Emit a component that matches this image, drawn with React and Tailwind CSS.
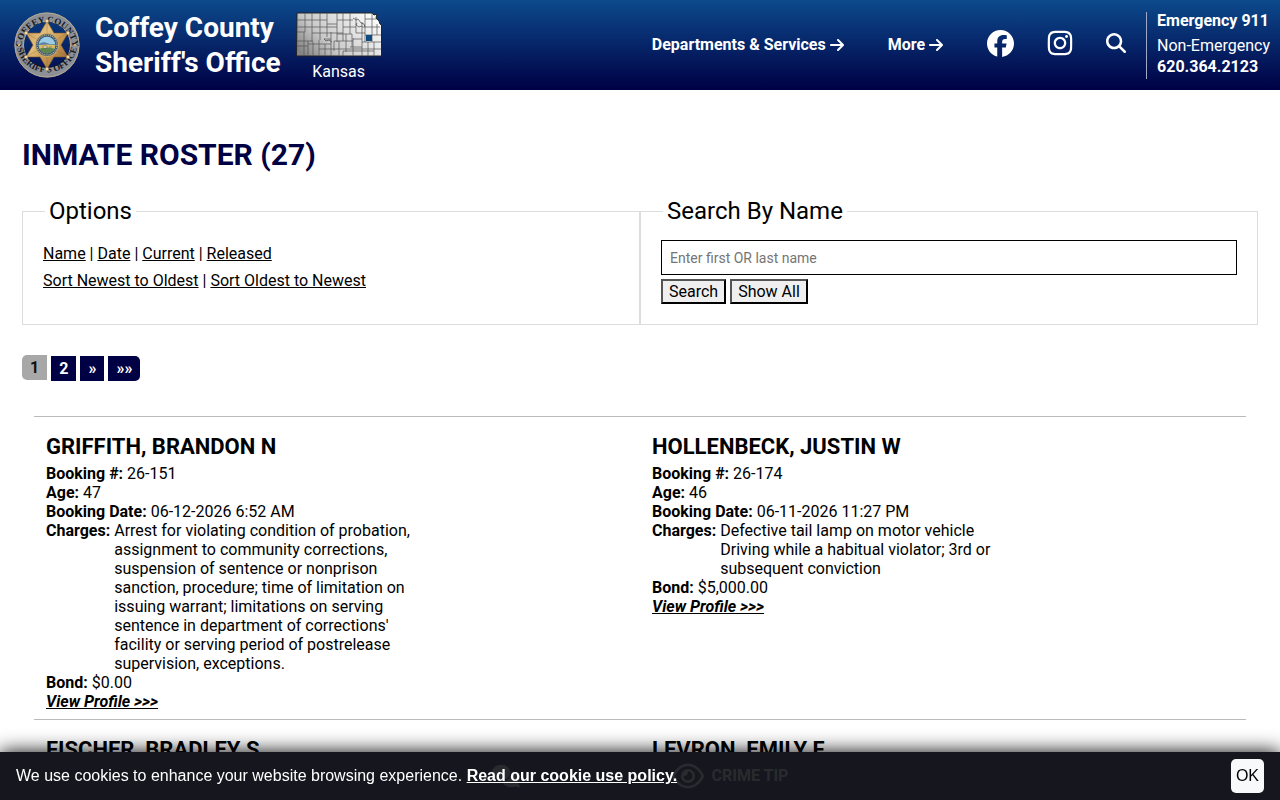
import React from 'react'
import { FaArrowRight, FaFacebook, FaInstagram, FaMagnifyingGlass, FaComments, FaRegEye } from 'react-icons/fa6'

const inmates = [
  {
    name: 'GRIFFITH, BRANDON N',
    booking: '26-151',
    age: 47,
    date: '06-12-2026 6:52 AM',
    charges: [
      "Arrest for violating condition of probation, assignment to community corrections, suspension of sentence or nonprison sanction, procedure; time of limitation on issuing warrant; limitations on serving sentence in department of corrections' facility or serving period of postrelease supervision, exceptions.",
    ],
    bond: '$0.00',
  },
  {
    name: 'HOLLENBECK, JUSTIN W',
    booking: '26-174',
    age: 46,
    date: '06-11-2026 11:27 PM',
    charges: ['Defective tail lamp on motor vehicle', 'Driving while a habitual violator; 3rd or subsequent conviction'],
    bond: '$5,000.00',
  },
]

function Badge() {
  const tips = [[0, -24], [21, -12], [21, 12], [0, 24], [-21, 12], [-21, -12]]
  return (
    <svg viewBox="-33 -33 66 66" className="h-[66px] w-[66px] shrink-0" aria-label="Coffey County Sheriff's Office badge">
      <defs>
        <linearGradient id="gold" x1="0" y1="0" x2="1" y2="1">
          <stop offset="0" stopColor="#c08a4c" />
          <stop offset=".35" stopColor="#e3c07c" />
          <stop offset=".6" stopColor="#c79750" />
          <stop offset="1" stopColor="#8f6230" />
        </linearGradient>
        <path id="ringTop" d="M-25.500 3 A25.500 25.500 0 1 1 25.500 3" />
        <path id="ringBottom" d="M-30.500 -3 A30.500 30.500 0 1 0 30.500 -3" />
      </defs>
      <circle r="28" fill="none" stroke="#8d8f96" strokeWidth="9" />
      <circle r="32" fill="none" stroke="#b3a88f" strokeWidth="1" />
      <circle r="23.5" fill="none" stroke="#b9a988" strokeWidth="1" />
      <g fontFamily="Liberation Serif, serif" fontWeight="700" fontSize="9" fill="#14161f" textAnchor="middle">
        <text><textPath href="#ringTop" startOffset="50%">COFFEY COUNTY</textPath></text>
        <text><textPath href="#ringBottom" startOffset="50%">SHERIFF'S OFFICE</textPath></text>
      </g>
      <path d="M0-24 7-12 21-12 14 0 21 12 7 12 0 24-7 12-21 12-14 0-21-12-7-12Z" fill="url(#gold)" stroke="#7c592c" strokeWidth=".6" />
      <path d="M0-24V24M-21-12 21 12M21-12-21 12" stroke="#94683a" strokeWidth=".5" opacity=".7" />
      {tips.map(([x, y]) => (
        <circle key={`${x},${y}`} cx={x} cy={y} r="1.8" fill="#eed9a8" stroke="#8d6a3c" strokeWidth=".4" />
      ))}
      <circle r="12" fill="#cda768" />
      <circle r="11" fill="#3d5c79" />
      <circle r="10" fill="none" stroke="#c9b882" strokeWidth="1.2" strokeDasharray="1 1" />
      <circle r="8.3" fill="#9ccbe6" />
      <path d="M-8 -1Q-4-4 0-2T8-1L8 3H-8Z" fill="#557fa5" />
      <path d="M-8.3 0Q0-1 8.3 0A8.3 8.3 0 0 1-8.3 0Z" fill="#d6bd68" />
      <path d="M-7.4 3.8Q0 1 7.4 3.8A8.3 8.3 0 0 1-7.4 3.8Z" fill="#5f8752" />
      <path d="M-4 1h4v2h-4zM2 2h3" fill="#efe9d2" stroke="#715338" strokeWidth=".5" />
      <circle cx="-28" r="1.2" fill="#d8b06c" />
      <circle cx="28" r="1.2" fill="#d8b06c" />
    </svg>
  )
}

function KansasMap() {
  return (
    <svg viewBox="0 0 86 46" className="h-[46px] w-[86px]" aria-label="Map of Kansas counties">
      <defs>
        <linearGradient id="state" x1="0" y1=".8" x2="1" y2=".3">
          <stop offset="0" stopColor="#848484" />
          <stop offset=".35" stopColor="#c9c9c9" />
          <stop offset="1" stopColor="#fafafa" />
        </linearGradient>
      </defs>
      <path d="M1 1 76 1 78 3 81 2 80 6 83 9 84 12 85.500 13 85.500 44 0.500 44Z" fill="url(#state)" stroke="#222" />
      <path
        d="M1 8H31M1 15H41M1 20H9M16 21H47M1 29H17M1 34H12M12 32H35M23 37H66M38 29H57M47 39H78M41 8H57M47 15H60M41 22H56M54 35H66M66 15H84M69 23H85M66 30H85M66 37H85M60 21H69M57 27H66M31 12H41M28 27H35M69 7H81"
        fill="none" stroke="#555" strokeWidth=".7"
      />
      <path
        d="M9 1V20M8 20V44M16 1V30M12 29V44M17 30V44M24 1V28M23 28V44M31 1V25M29 32V44M35 20V44M41 1V30M38 29V39M47 1V29M43 29V44M50 22V40M54 1V22M56 22V35M47 39V44M57 26V44M60 5V21M66 10V44M69 1V17M69 17V30M72 30V44M76 1V30M78 30V44M81 12V23"
        fill="none" stroke="#555" strokeWidth=".7"
      />
      <path d="M28 27 30 29 33 28 36 30M57 6 60 8 62 7 65 11 68 12 69 15M61 11 60 13 63 15 66 14" fill="none" stroke="#444" strokeWidth=".7" />
      <rect x="70" y="23" width="6" height="6" fill="#0c4a80" />
    </svg>
  )
}

function Inmate({ inmate }) {
  return (
    <div className="w-1/2 px-3">
      <h2 className="mt-4 mb-[3px] text-[22px] leading-7 font-bold">{inmate.name}</h2>
      <p><b>Booking #:</b> {inmate.booking}</p>
      <p><b>Age:</b> {inmate.age}</p>
      <p><b>Booking Date:</b> {inmate.date}</p>
      <div className="flex gap-1">
        <b>Charges:</b>
        <div className="max-w-[300px]">
          {inmate.charges.map((charge) => <p key={charge}>{charge}</p>)}
        </div>
      </div>
      <p><b>Bond:</b> {inmate.bond}</p>
      <a href="#profile" className="font-bold italic underline">View Profile &gt;&gt;&gt;</a>
    </div>
  )
}

function App() {
  return (
    <div className="bg-white font-['Roboto',sans-serif] text-base text-black">
      {/* Header */}
      <header className="flex h-[90px] items-center bg-linear-to-b/srgb from-[#0c4a8c] to-[#000044] pr-2.5 pl-3.5 text-white">
        <Badge />
        <div className="ml-[15px] text-[28px] leading-[35px] font-bold whitespace-nowrap">
          Coffey County<br />Sheriff's Office
        </div>
        <div className="ml-[15px] flex flex-col items-center gap-1 pt-1">
          <KansasMap />
          <span className="leading-5">Kansas</span>
        </div>
        <nav className="ml-auto flex items-center whitespace-nowrap">
          <a href="#departments" className="mr-11 flex items-center gap-1 font-bold">
            Departments &amp; Services <FaArrowRight className="h-4 w-3.5" />
          </a>
          <a href="#more" className="mr-11 flex items-center gap-1 font-bold">
            More <FaArrowRight className="h-4 w-3.5" />
          </a>
          <div className="flex items-center gap-8 pr-5 pb-1">
            <a href="#facebook" aria-label="Facebook"><FaFacebook className="size-[27px]" /></a>
            <a href="#instagram" aria-label="Instagram"><FaInstagram className="size-7" /></a>
            <a href="#search" aria-label="Search"><FaMagnifyingGlass className="size-5" /></a>
          </div>
        </nav>
        <div className="border-l border-[#a0a8c8] pb-0.5 pl-2.5 leading-[21px] whitespace-nowrap">
          <p className="mb-1 -mt-0.5 font-bold">Emergency 911</p>
          <p>Non-Emergency</p>
          <p className="font-bold">620.364.2123</p>
        </div>
      </header>

      <main className="px-[22px] pt-[47px] pb-24">
        <h1 className="text-[30px] leading-9 font-bold text-[#000044]">INMATE ROSTER (27)</h1>

        {/* Filters */}
        <div className="mt-6 grid grid-cols-2">
          <fieldset className="border border-[#ddd] px-5 pb-5">
            <legend className="ml-0.5 px-1 text-2xl leading-7">Options</legend>
            <div className="pt-[15px] leading-[27px]">
              <p>
                <a href="#name" className="underline">Name</a> | <a href="#date" className="underline">Date</a> |{' '}
                <a href="#current" className="underline">Current</a> | <a href="#released" className="underline">Released</a>
              </p>
              <p>
                <a href="#newest" className="underline">Sort Newest to Oldest</a> |{' '}
                <a href="#oldest" className="underline">Sort Oldest to Newest</a>
              </p>
            </div>
          </fieldset>
          <fieldset className="border border-[#ddd] px-5 pb-5">
            <legend className="ml-0.5 px-1 text-2xl leading-7">Search By Name</legend>
            <form className="pt-[15px]" onSubmit={(e) => e.preventDefault()}>
              <input
                type="text"
                aria-label="Search by name"
                placeholder="Enter first OR last name"
                className="block h-[35px] w-full border border-black px-2 text-sm placeholder:text-[#757575]"
              />
              <div className="mt-1 flex gap-1">
                <button type="submit" className="h-[25px] border-2 border-black bg-[#efefef] px-1.5 leading-5 [border-style:outset]">Search</button>
                <button type="button" className="h-[25px] border-2 border-black bg-[#efefef] px-1.5 leading-5 [border-style:outset]">Show All</button>
              </div>
            </form>
          </fieldset>
        </div>

        {/* Pagination */}
        <nav aria-label="Pages" className="mt-[30px] mb-[35px] flex items-start gap-1 leading-[25px] font-bold text-white">
          <span className="mb-px rounded-l-[5px] bg-[#a8a8a8] px-2 text-[#111]">1</span>
          <a href="#page2" className="mt-px bg-[#000044] px-2">2</a>
          <a href="#next" className="mt-px bg-[#000044] px-2">»</a>
          <a href="#last" className="mt-px rounded-r-[5px] bg-[#000044] px-2">»»</a>
        </nav>

        {/* Roster */}
        <div className="px-3 leading-[19px]">
          <div className="flex border-t border-[#bbb] pb-2">
            {inmates.map((inmate) => <Inmate key={inmate.name} inmate={inmate} />)}
          </div>
          <div className="flex border-t border-[#bbb]">
            <h2 className="mt-4 w-1/2 px-3 text-[22px] leading-7 font-bold">FISCHER, BRADLEY S</h2>
            <h2 className="mt-4 w-1/2 px-3 text-[22px] leading-7 font-bold">LEVRON, EMILY F</h2>
          </div>
        </div>
      </main>

      {/* Quick links bar, under the cookie notice */}
      <div className="fixed inset-x-0 bottom-0 flex h-12 items-center justify-center gap-38 bg-[#000044] font-bold text-white">
        <a href="#contact" aria-label="Contact"><FaComments className="size-7" /></a>
        <a href="#tip" className="flex items-center gap-2"><FaRegEye className="size-8" /> CRIME TIP</a>
      </div>

      {/* Cookie notice */}
      <div className="fixed inset-x-0 bottom-0 flex h-12 items-center justify-between bg-[#17181b]/92 px-4 font-['Liberation_Sans',sans-serif] text-white shadow-[0_0_20px_#000]">
        <p>
          We use cookies to enhance your website browsing experience.{' '}
          <a href="#cookies" className="font-bold underline">Read our cookie use policy.</a>
        </p>
        <button type="button" className="h-[34px] rounded-[5px] bg-[#f8f9fa] px-[5px] text-black">OK</button>
      </div>
    </div>
  )
}

export default App
